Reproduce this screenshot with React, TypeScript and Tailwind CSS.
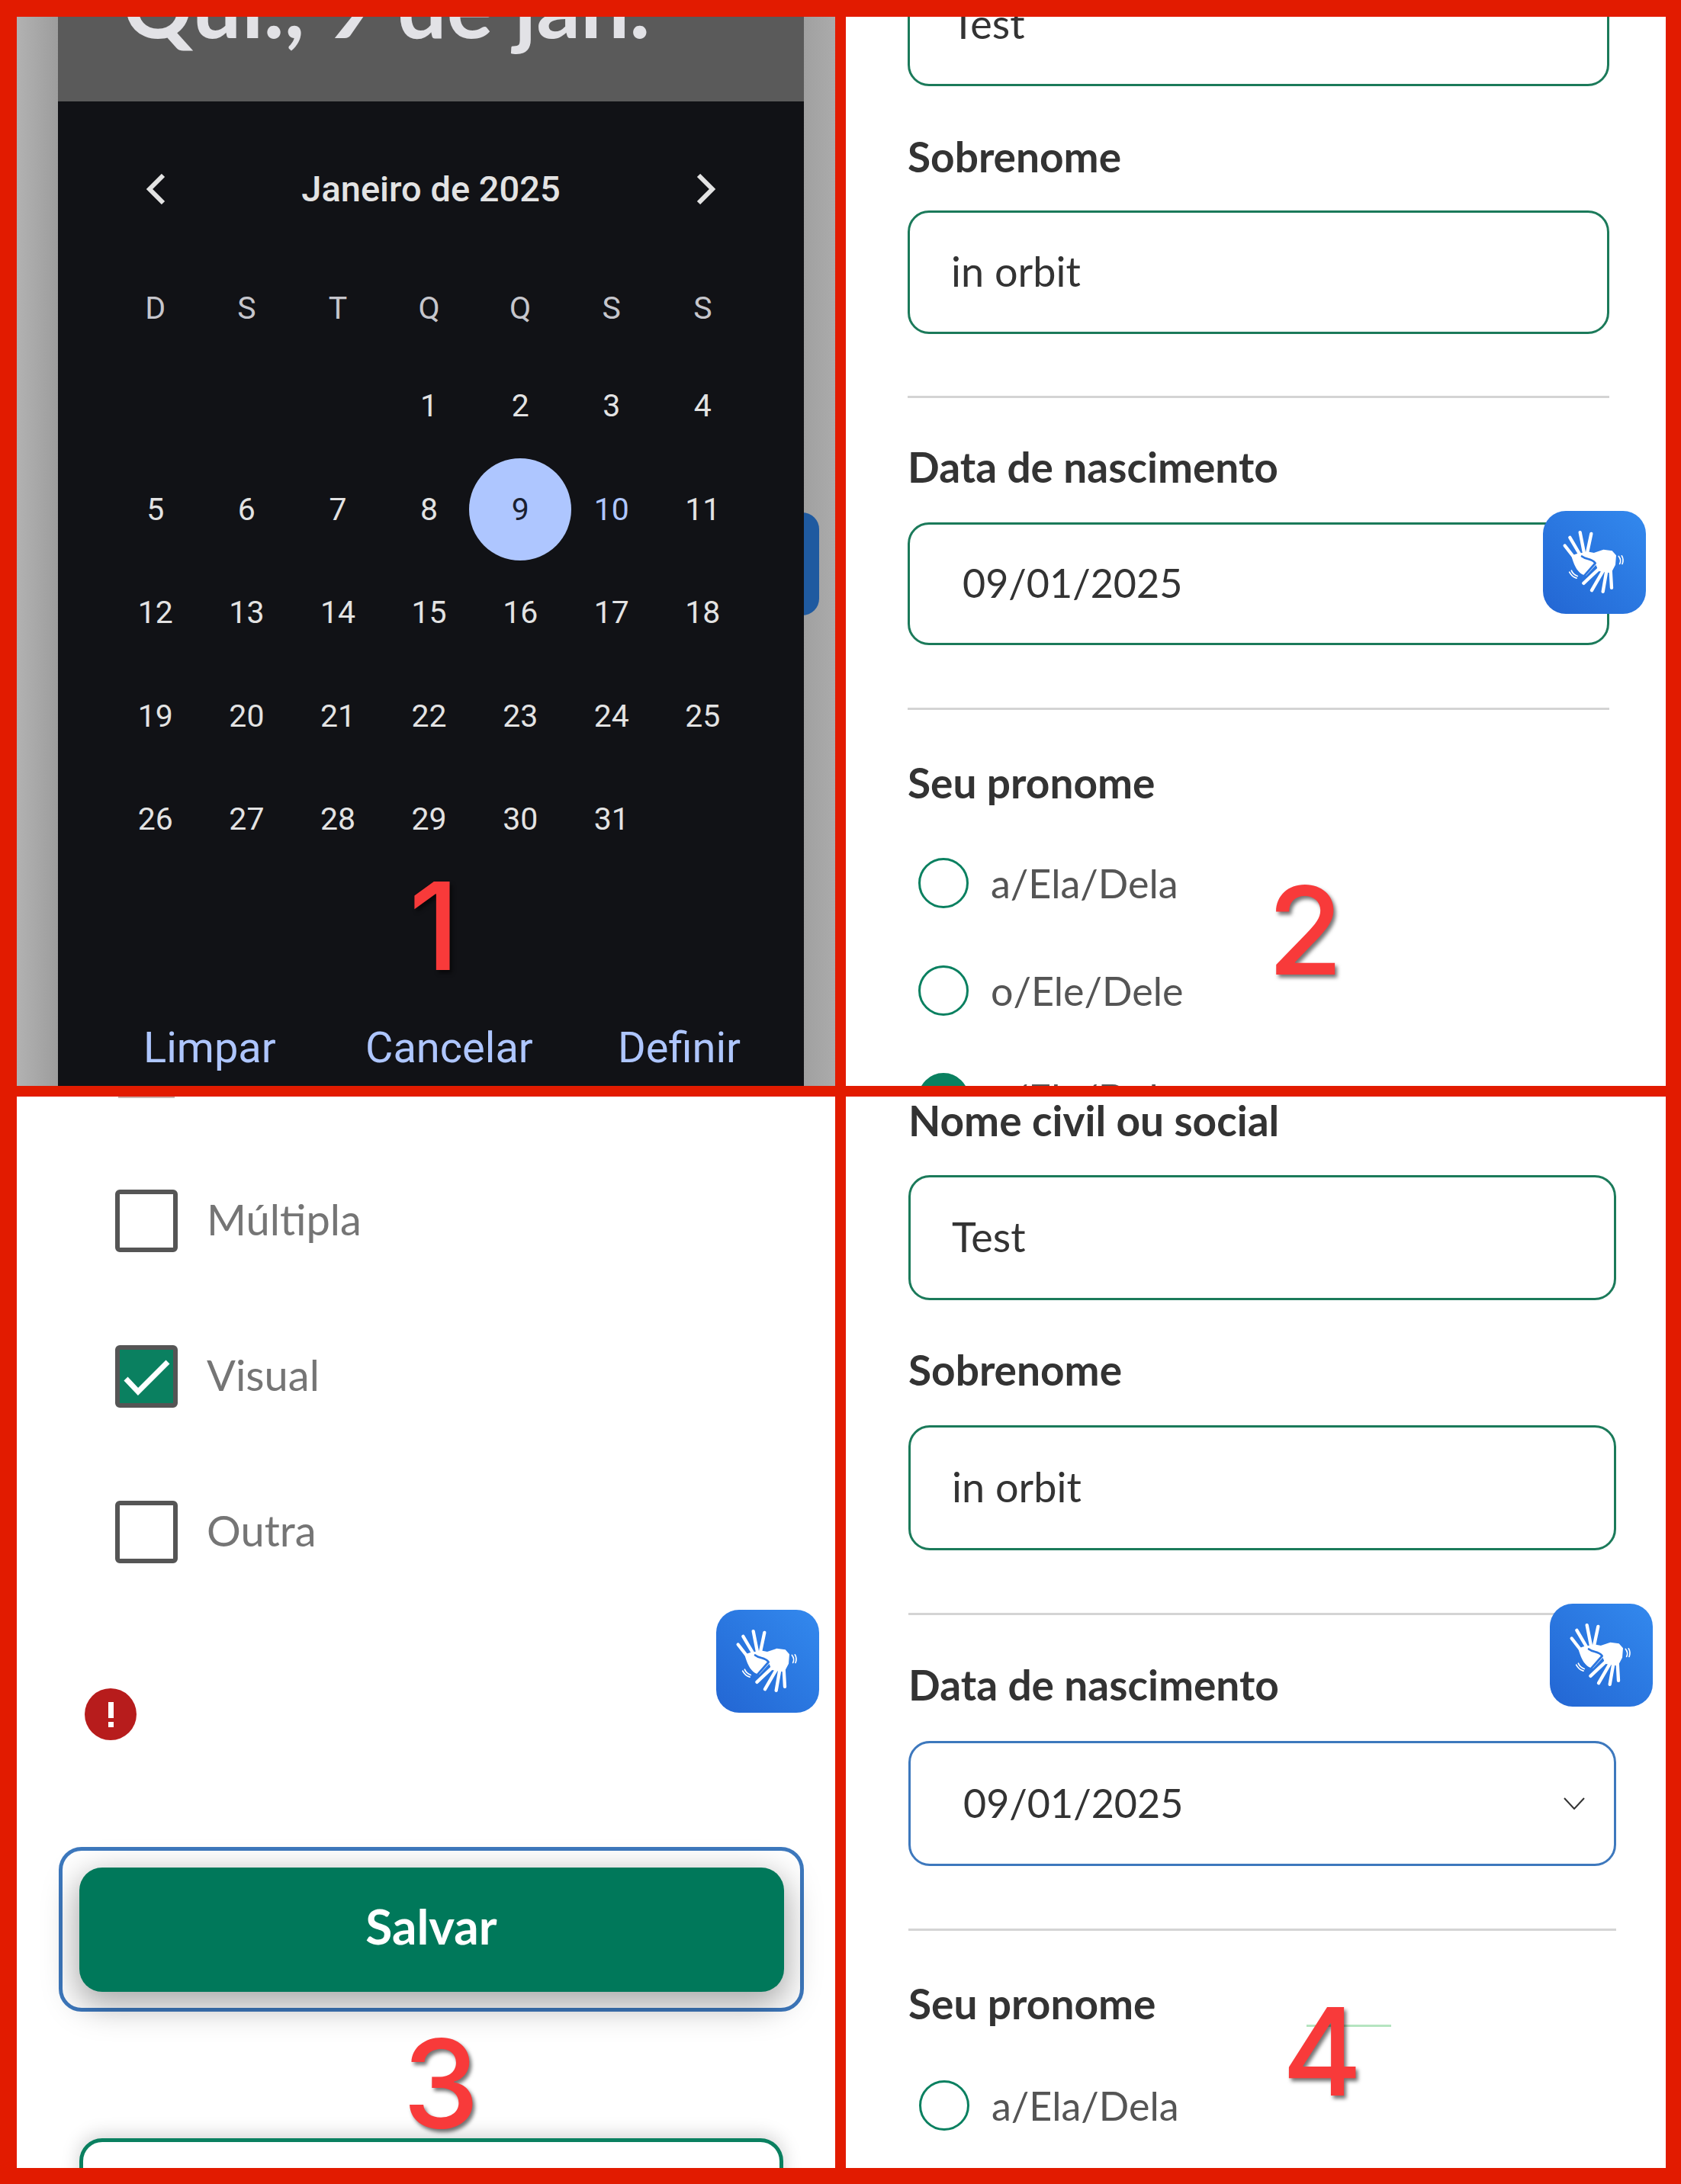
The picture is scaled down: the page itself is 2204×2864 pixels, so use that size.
import React from "react";

const label = "font-['Lato',sans-serif] font-bold text-[#333] text-[55px] leading-[64px] shrink-0";
const divider = "h-[3px] bg-[#d4d4d4] shrink-0";

function Hands() {
  return (
    <svg viewBox="0 0 405 404" className="w-full h-full">
      <g stroke="#fff" strokeWidth="13" strokeLinecap="round" fill="none">
        <path d="M86 136L128 190" />
        <path d="M106 104L146 172" />
        <path d="M146 84L162 165" />
        <path d="M190 89L174 165" />
      </g>
      <path d="M112 176L132 168L178 160L205 165L210 210L170 254C138 250 122 215 112 176Z" fill="#fff" />
      <path d="M160 178L238 152L272 156L288 174L285 212L268 244L215 236L213 222L205 205Z" fill="#fff" />
      <g stroke="#fff" strokeWidth="13" strokeLinecap="round" fill="none">
        <path d="M160 284L226 222" />
        <path d="M192 312L236 236" />
        <path d="M236 317L250 236" />
        <path d="M270 302L266 232" />
      </g>
      <path d="M153 178C170 192 192 186 206 205L156 262" fill="none" stroke="#2b75df" strokeWidth="8" strokeLinejoin="round" strokeLinecap="round" />
      <g stroke="#fff" strokeWidth="5" strokeLinecap="round" fill="none">
        <path d="M298 178C306 188 307 198 302 208" />
        <path d="M310 176C316 186 316 198 312 208" />
        <path d="M104 240C110 252 118 260 132 264" />
        <path d="M112 234C116 244 124 252 136 256" />
      </g>
    </svg>
  );
}

function Widget({ className }: { className: string }) {
  return (
    <div className={`absolute w-[135px] h-[135px] rounded-[30px] bg-gradient-to-tr from-[#2366d3] to-[#3389ee] ${className}`}>
      <Hands />
    </div>
  );
}

function Num({ children, className }: { children: React.ReactNode; className: string }) {
  return (
    <div className={`absolute font-['Inter',sans-serif] font-medium text-[#f83a3a] text-[160px] leading-none [text-shadow:3px_4px_5px_rgba(0,0,0,0.55)] ${className}`}>
      {children}
    </div>
  );
}

function Field({ value, w, h, pad, blue, chevron, date, className }: { value?: string; w: string; h: string; pad: string; blue?: boolean; chevron?: boolean; date?: boolean; className?: string }) {
  return (
    <div className={`${w} ${h} ${pad} shrink-0 flex items-center justify-between rounded-[28px] border-[3px] bg-white ${blue ? "border-[#3d78bd]" : "border-[#1b7a5a]"} ${className ?? ""}`}>
      <span className={`font-['Lato',sans-serif] text-[#333] pb-[3px] ${date ? "text-[52px]" : "text-[54px]"}`}>{value}</span>
      {chevron && (
        <svg viewBox="0 0 28 16" className="w-[28px] h-[16px] mr-[38px]" fill="none" stroke="#333" strokeWidth="2">
          <path d="M1 1L14 15L27 1" />
        </svg>
      )}
    </div>
  );
}

function Radio({ text, filled }: { text: string; filled?: boolean }) {
  return (
    <div className="flex items-center gap-[29px] ml-[14px] h-[66px] shrink-0">
      <span className={`w-[66px] h-[66px] rounded-full border-[3px] border-[#0a8060] shrink-0 ${filled ? "bg-[#0a8060]" : ""}`} />
      <span className="font-['Lato',sans-serif] text-[#555] text-[52px]">{text}</span>
    </div>
  );
}

function Check({ text, checked, className }: { text: string; checked?: boolean; className?: string }) {
  return (
    <div className={`flex items-center gap-[38px] h-[82px] shrink-0 ${className}`}>
      <span className={`w-[82px] h-[82px] shrink-0 rounded-[6px] border-[6px] border-[#555] flex items-center justify-center ${checked ? "bg-[#0a8060]" : ""}`}>
        {checked && (
          <svg viewBox="0 0 70 70" className="w-[70px] h-[70px]" fill="none" stroke="#fff" strokeWidth="7">
            <path d="M8 38L24 55L63 16" />
          </svg>
        )}
      </span>
      <span className="font-['Lato',sans-serif] text-[#757575] text-[56px] pb-[4px]">{text}</span>
    </div>
  );
}

const rows: (number | null)[][] = [
  [null, null, null, 1, 2, 3, 4],
  [5, 6, 7, 8, 9, 10, 11],
  [12, 13, 14, 15, 16, 17, 18],
  [19, 20, 21, 22, 23, 24, 25],
  [26, 27, 28, 29, 30, 31, null],
];

export default function App() {
  return (
    <div className="w-[2204px] h-[2864px] bg-[#e21b00] pt-[22px] pl-[22px] overflow-hidden">
      <div className="grid grid-cols-[1073px_1075px] grid-rows-[1402px_1405px] gap-x-[14px] gap-y-[14px]">
        {/* Panel 1 */}
        <div className="relative overflow-hidden h-[1402px] bg-[linear-gradient(90deg,#b2b2b2_0%,#9d9d9d_5%,#9d9d9d_95%,#ababab_100%)]">
          <div className="absolute left-[1030px] top-[650px] w-[22px] h-[135px] bg-[#1f5aa0] rounded-r-[24px]" />
          <div className="relative ml-[54px] w-[978px] h-full flex flex-col">
            <div className="h-[111px] bg-[#5a5a5a] overflow-hidden shrink-0 pl-[85px]">
              <div className="font-['Lato',sans-serif] font-bold text-[#e2e2e6] text-[114px] leading-[120px] mt-[-76px] whitespace-nowrap">Qui., 9 de jan.</div>
            </div>
            <div className="flex-1 bg-[#111216] font-['Roboto',sans-serif] relative">
              <div className="flex items-center justify-between pl-[115px] pr-[115px] h-[60px] mt-[85px]">
                <svg viewBox="0 0 26 40" className="w-[26px] h-[40px]" fill="none" stroke="#e3e3e3" strokeWidth="6"><path d="M23 2L5 20L23 38" /></svg>
                <span className="text-[#e3e3e3] text-[47px] font-medium">Janeiro de 2025</span>
                <svg viewBox="0 0 26 40" className="w-[26px] h-[40px]" fill="none" stroke="#e3e3e3" strokeWidth="6"><path d="M3 2L21 20L3 38" /></svg>
              </div>
              <div className="grid grid-cols-[repeat(7,119.6px)] ml-[68px] mt-[96px] text-center text-[#c6c6cc] text-[41px] leading-[60px]">
                {["D", "S", "T", "Q", "Q", "S", "S"].map((d, i) => (
                  <span key={i}>{d}</span>
                ))}
              </div>
              <div className="ml-[68px] mt-[31px] grid grid-cols-[repeat(7,119.6px)] auto-rows-[135.5px] text-[41px] text-center text-[#e3e3e3]">
                {rows.flat().map((d, i) => (
                  <span key={i} className="flex items-center justify-center relative">
                    {d === 9 && <span className="absolute w-[134px] h-[134px] rounded-full bg-[#aec6ff]" />}
                    <span className={`relative ${d === 9 ? "text-[#1a2030]" : d === 10 ? "text-[#aec6ff]" : ""}`}>{d}</span>
                  </span>
                ))}
              </div>
              <div className="absolute bottom-[15px] left-[112px] right-[83px] flex justify-between text-[#aec6ff] text-[56px] leading-[70px]">
                <span>Limpar</span>
                <span className="ml-[6px]">Cancelar</span>
                <span>Definir</span>
              </div>
            </div>
          </div>
          <Num className="left-[514px] top-[1112px]">1</Num>
        </div>

        {/* Panel 2 */}
        <div className="relative overflow-hidden h-[1402px] bg-white pl-[81px] flex flex-col">
          <Field value="Test" w="w-[920px]" h="h-[162px]" pad="pl-[54px]" className="-mt-[71px]" />
          <div className={`${label} mt-[60px]`}>Sobrenome</div>
          <Field value="in orbit" w="w-[920px]" h="h-[162px]" pad="pl-[54px]" className="mt-[39px]" />
          <div className={`w-[920px] ${divider} mt-[81px]`} />
          <div className={`${label} mt-[58px]`}>Data de nascimento</div>
          <Field value="09/01/2025" date w="w-[920px]" h="h-[161px]" pad="pl-[69px]" className="mt-[41px]" />
          <div className={`w-[920px] ${divider} mt-[82px]`} />
          <div className={`${label} mt-[63px]`}>Seu pronome</div>
          <div className="mt-[67px] flex flex-col gap-[75px] shrink-0">
            <Radio text="a/Ela/Dela" />
            <Radio text="o/Ele/Dele" />
            <Radio text="a/Ela/Dela" filled />
          </div>
          <Widget className="left-[914px] top-[648px]" />
          <Num className="left-[553px] top-[1118px]">2</Num>
        </div>

        {/* Panel 3 */}
        <div className="relative overflow-hidden h-[1405px] bg-white flex flex-col">
          <div className="ml-[133px] w-[74px] h-[2px] bg-[#c9b0ac] shrink-0" />
          <Check text="Múltipla" className="ml-[129px] mt-[120px]" />
          <Check text="Visual" checked className="ml-[129px] mt-[122px]" />
          <Check text="Outra" className="ml-[129px] mt-[122px]" />
          <div className="ml-[89px] mt-[164px] w-[68px] h-[68px] shrink-0 rounded-full bg-[#b71c1c] flex flex-col items-center justify-center gap-[5px]">
            <span className="w-[7px] h-[21px] bg-white" />
            <span className="w-[7px] h-[7px] bg-white" />
          </div>
          <div className="ml-[55px] mt-[140px] w-[977px] h-[216px] shrink-0 rounded-[30px] border-[5px] border-[#3d78bd] flex items-center justify-center">
            <div className="w-[924px] h-[163px] pb-[8px] rounded-[30px] bg-[#00785a] shadow-[0_14px_44px_4px_rgba(0,0,0,0.34)] flex items-center justify-center font-['Lato',sans-serif] font-bold text-white text-[64px]">Salvar</div>
          </div>
          <div className="ml-[82px] mt-[166px] w-[923px] h-[120px] shrink-0 rounded-t-[30px] border-[5px] border-[#0a8060] bg-white shadow-[0_-4px_24px_rgba(0,0,0,0.18)]" />
          <Widget className="left-[917px] top-[673px]" />
          <Num className="left-[506px] top-[1214px]">3</Num>
        </div>

        {/* Panel 4 */}
        <div className="relative overflow-hidden h-[1405px] bg-white pl-[82px] flex flex-col">
          <div className={`${label} -mt-[1px]`}>Nome civil ou social</div>
          <Field value="Test" w="w-[928px]" h="h-[164px]" pad="pl-[54px]" className="mt-[40px]" />
          <div className={`${label} mt-[59px]`}>Sobrenome</div>
          <Field value="in orbit" w="w-[928px]" h="h-[164px]" pad="pl-[54px]" className="mt-[41px]" />
          <div className={`w-[928px] ${divider} mt-[82px]`} />
          <div className={`${label} mt-[59px]`}>Data de nascimento</div>
          <Field value="09/01/2025" date blue chevron w="w-[928px]" h="h-[164px]" pad="pl-[69px]" className="mt-[42px]" />
          <div className={`w-[928px] ${divider} mt-[82px]`} />
          <div className={`${label} mt-[63px]`}>Seu pronome</div>
          <div className="mt-[69px] shrink-0"><Radio text="a/Ela/Dela" /></div>
          <div className="absolute left-[604px] top-[1217px] w-[111px] h-[3px] bg-[#b5e5c0]" />
          <Widget className="left-[923px] top-[665px]" />
          <Num className="left-[572px] top-[1172px]">4</Num>
        </div>
      </div>
    </div>
  );
}
